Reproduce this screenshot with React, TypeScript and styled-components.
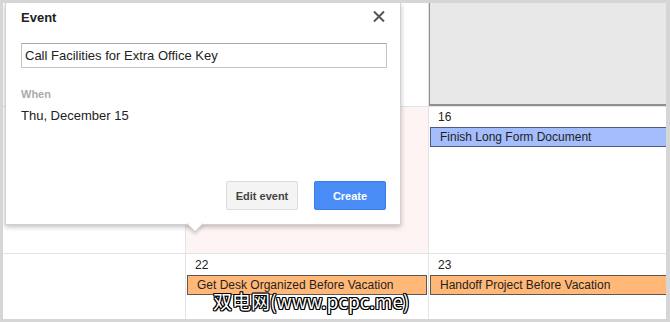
import React from "react";
import styled, { createGlobalStyle } from "styled-components";

const Global = createGlobalStyle`
  html, body { margin: 0; padding: 0; background: #d6d6d6; }
  body { font-family: "Liberation Sans", Arial, sans-serif; }
  * { box-sizing: border-box; }
`;

const Frame = styled.div`
  position: relative;
  width: 670px;
  height: 322px;
  padding: 3px 4px 3px 3px;
  background: #d6d6d6;
`;

const Calendar = styled.div`
  position: relative;
  display: grid;
  grid-template-columns: 182px 242px 237px;
  grid-template-rows: 103px 146px 65px;
  gap: 1px;
  width: 663px;
  height: 316px;
  background: #e3e3e3;
  overflow: hidden;
`;

type Variant = "plain" | "today" | "muted";

const Cell = styled.div<{ $variant?: Variant }>`
  display: flex;
  flex-direction: column;
  min-width: 0;
  overflow: hidden;
  background: ${(p) =>
    p.$variant === "today" ? "#fff4f4" : p.$variant === "muted" ? "#e8e8e8" : "#ffffff"};
  border-left: ${(p) => (p.$variant === "muted" ? "1px solid #8f8f8f" : "none")};
  border-bottom: ${(p) => (p.$variant === "muted" ? "2px solid #8f8f8f" : "none")};
`;

const DayNumber = styled.div<{ $top?: number }>`
  padding: ${(p) => p.$top ?? 3}px 9px 0;
  font-size: 12px;
  line-height: 15px;
  color: #222;
`;

const EventBar = styled.div<{ $color: "blue" | "orange"; $continues?: boolean }>`
  margin: 2px ${(p) => (p.$continues ? "-4px" : "1px")} 0 1px;
  height: 20px;
  padding: 0 9px;
  font-size: 12px;
  line-height: 18px;
  color: #1f1f1f;
  white-space: nowrap;
  background: ${(p) => (p.$color === "blue" ? "#a4bdfc" : "#ffb878")};
  border: 1px solid ${(p) => (p.$color === "blue" ? "#4f5b78" : "#5e5650")};
`;

const Popup = styled.div`
  position: absolute;
  left: 2px;
  top: 0;
  width: 396px;
  height: 222px;
  z-index: 2;
  display: flex;
  flex-direction: column;
  padding: 7px 14px 14px 15px;
  background: #fff;
  border: 1px solid rgba(0, 0, 0, 0.18);
  border-top: 0;
  box-shadow: 0 2px 5px rgba(0, 0, 0, 0.25);
`;

const Tail = styled.div`
  position: absolute;
  left: 183px;
  top: 215px;
  width: 12px;
  height: 12px;
  background: #fff;
  transform: rotate(45deg);
  border-right: 1px solid rgba(0, 0, 0, 0.2);
  border-bottom: 1px solid rgba(0, 0, 0, 0.2);
  box-shadow: 2px 2px 3px rgba(0, 0, 0, 0.12);
`;

const Header = styled.div`
  display: flex;
  justify-content: space-between;
  align-items: flex-start;
  height: 16px;
`;

const Title = styled.div`
  font-size: 13px;
  font-weight: bold;
  line-height: 16px;
  color: #222;
`;

const Close = styled.button`
  margin: 1px 1px 0 0;
  padding: 0;
  border: 0;
  background: none;
  width: 12px;
  height: 11px;
  display: flex;
  cursor: pointer;
`;

const TitleInput = styled.input`
  margin-top: 17px;
  width: 366px;
  height: 25px;
  padding: 0 3px;
  font-family: "Liberation Sans", Arial, sans-serif;
  font-size: 13px;
  color: #222;
  border: 1px solid #c4c4c4;
  border-top-color: #a8a8a8;
  border-radius: 1px;
  outline: none;
`;

const Label = styled.div`
  margin-top: 20px;
  font-size: 11px;
  font-weight: bold;
  line-height: 13px;
  color: #ababab;
`;

const DateText = styled.div`
  margin-top: 7px;
  font-size: 13px;
  line-height: 16px;
  color: #222;
`;

const Actions = styled.div`
  margin-top: auto;
  display: flex;
  justify-content: flex-end;
  gap: 16px;
`;

const Button = styled.button<{ $primary?: boolean }>`
  height: 29px;
  min-width: 72px;
  padding: 0 8px;
  font-family: "Liberation Sans", Arial, sans-serif;
  font-size: 11px;
  font-weight: bold;
  border-radius: 2px;
  cursor: pointer;
  color: ${(p) => (p.$primary ? "#fff" : "#444")};
  background: ${(p) => (p.$primary ? "#4a8cf6" : "#f4f4f4")};
  border: 1px solid ${(p) => (p.$primary ? "#3a7de8" : "#dcdcdc")};
`;

const Watermark = styled.div`
  position: absolute;
  left: 213px;
  top: 289px;
  z-index: 5;
  font-family: "Noto Sans CJK SC", "Liberation Sans", sans-serif;
  font-size: 19px;
  line-height: 24px;
  color: #fff;
  white-space: nowrap;
  text-shadow: 1px 0 0 #000, -1px 0 0 #000, 0 1px 0 #000, 0 -1px 0 #000,
    1px 1px 0 #000, -1px -1px 0 #000, 1px -1px 0 #000, -1px 1px 0 #000;
`;

export default function App() {
  return (
    <>
      <Global />
      <Frame>
        <Calendar>
          <Cell />
          <Cell />
          <Cell $variant="muted" />
          <Cell />
          <Cell $variant="today" />
          <Cell>
            <DayNumber>16</DayNumber>
            <EventBar $color="blue" $continues>Finish Long Form Document</EventBar>
          </Cell>
          <Cell />
          <Cell>
            <DayNumber $top={4}>22</DayNumber>
            <EventBar $color="orange">Get Desk Organized Before Vacation</EventBar>
          </Cell>
          <Cell>
            <DayNumber $top={4}>23</DayNumber>
            <EventBar $color="orange" $continues>Handoff Project Before Vacation</EventBar>
          </Cell>
          <Popup>
            <Header>
              <Title>Event</Title>
              <Close aria-label="Close">
                <svg width="12" height="11" viewBox="0 0 12 11">
                  <path d="M1 0.5 L11 10.5 M11 0.5 L1 10.5" stroke="#555" strokeWidth="2" />
                </svg>
              </Close>
            </Header>
            <TitleInput defaultValue="Call Facilities for Extra Office Key" />
            <Label>When</Label>
            <DateText>Thu, December 15</DateText>
            <Actions>
              <Button>Edit event</Button>
              <Button $primary>Create</Button>
            </Actions>
            <Tail />
          </Popup>
        </Calendar>
        <Watermark>双电网(www.pcpc.me)</Watermark>
      </Frame>
    </>
  );
}
